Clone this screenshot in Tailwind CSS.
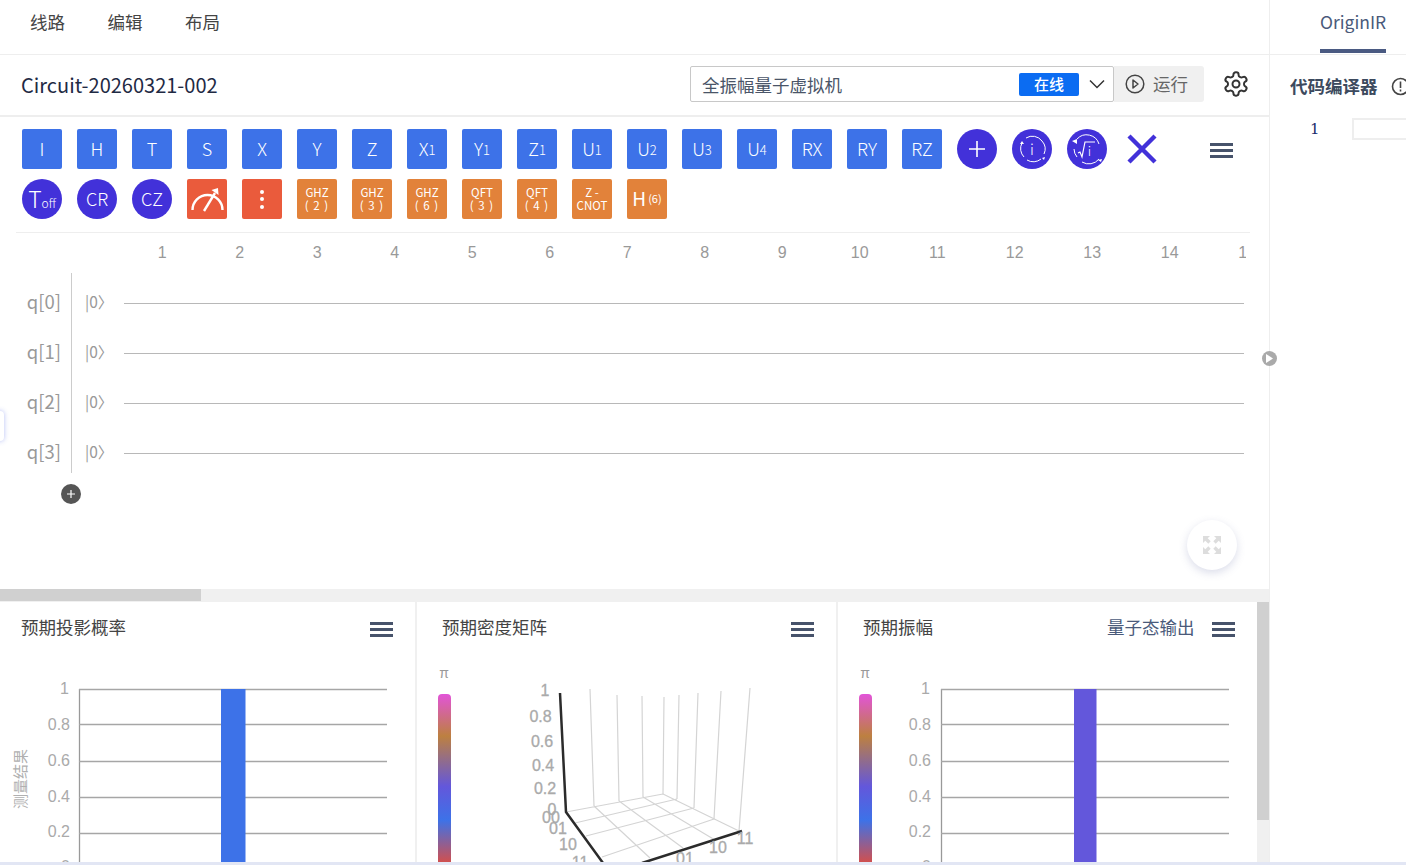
<!DOCTYPE html>
<html lang="zh-CN">
<head>
<meta charset="UTF-8">
<title>量子线路</title>
<script src="https://cdn.jsdelivr.net/npm/@tailwindcss/browser@4"></script>
</head>
<body class="font-['Noto_Sans_CJK_SC',sans-serif] bg-white text-[#444]">
<div class="relative w-[1406px] h-[865px] overflow-hidden flex flex-col">
  <div class="flex h-[862px]">

    <!-- 左侧 -->
    <div class="w-[1270px] shrink-0 border-r border-[#eee] flex flex-col">
      <!-- 顶部菜单 -->
      <div class="h-[55px] shrink-0 border-b border-[#eee] flex items-center pl-[30px] gap-[42.5px] text-[17.5px] leading-[46px] pb-[10px] text-[#444]">
        <span>线路</span><span>编辑</span><span>布局</span>
      </div>
      <!-- 标题栏 -->
      <div class="h-[62px] shrink-0 border-b-2 border-[#eee] flex items-center pl-[21px] pb-[2px]">
        <h1 class="text-[20px] text-[#1f2a44] w-[669px] mt-[2px]">Circuit-20260321-002</h1>
        <div class="w-[424px] h-[36px] border border-[#c8c8c8] rounded-[2px] flex items-center pl-[11px]">
          <span class="text-[17.5px] text-[#4a5568] w-[317px] mt-[2px]">全振幅量子虚拟机</span>
          <span class="w-[60px] h-[23px] bg-[#0b6cf2] rounded-[2px] text-white text-[15px] font-medium flex items-center justify-center">在线</span>
          <svg class="ml-[10px]" width="16" height="10" viewBox="0 0 16 10" fill="none" stroke="#333" stroke-width="1.5"><path d="M1 1.5l7 7 7-7"/></svg>
        </div>
        <div class="w-[90px] h-[36px] bg-[#f0f0f0] rounded-r-[3px] flex items-center pl-[11px] gap-[8px]">
          <svg width="20" height="20" viewBox="0 0 20 20" fill="none" stroke="#444" stroke-width="1.5"><circle cx="10" cy="10" r="8.8"/><path d="M8 6l5 4-5 4z" stroke-linejoin="round"/></svg>
          <span class="text-[17.5px] text-[#666]">运行</span>
        </div>
        <svg class="ml-[18px]" width="28" height="28" viewBox="0 0 24 24" fill="none" stroke="#333" stroke-width="1.7" stroke-linejoin="round"><path d="M12.22 2h-.44a2 2 0 0 0-2 2v.18a2 2 0 0 1-1 1.73l-.43.25a2 2 0 0 1-2 0l-.15-.08a2 2 0 0 0-2.73.73l-.22.38a2 2 0 0 0 .73 2.73l.15.1a2 2 0 0 1 1 1.72v.51a2 2 0 0 1-1 1.74l-.15.09a2 2 0 0 0-.73 2.73l.22.38a2 2 0 0 0 2.73.73l.15-.08a2 2 0 0 1 2 0l.43.25a2 2 0 0 1 1 1.73V20a2 2 0 0 0 2 2h.44a2 2 0 0 0 2-2v-.18a2 2 0 0 1 1-1.73l.43-.25a2 2 0 0 1 2 0l.15.08a2 2 0 0 0 2.73-.73l.22-.39a2 2 0 0 0-.73-2.73l-.15-.08a2 2 0 0 1-1-1.74v-.5a2 2 0 0 1 1-1.74l.15-.09a2 2 0 0 0 .73-2.73l-.22-.38a2 2 0 0 0-2.73-.73l-.15.08a2 2 0 0 1-2 0l-.43-.25a2 2 0 0 1-1-1.73V4a2 2 0 0 0-2-2z"/><circle cx="12" cy="12" r="3"/></svg>
      </div>

      <!-- 线路区 -->
      <div class="relative h-[472px] shrink-0 overflow-hidden">
        <!-- 量子门 -->
        <div class="ml-[16px] mr-[19px] pl-[6px] pt-[12px] h-[116px] border-b border-[#eee]">
          <div class="flex gap-[15px] h-[40px] text-white text-[18px] font-light">
            <div class="w-[40px] h-[40px] pb-[1px] rounded-[2px] bg-[#3d72e8] flex items-center justify-center">I</div>
            <div class="w-[40px] h-[40px] pb-[1px] rounded-[2px] bg-[#3d72e8] flex items-center justify-center">H</div>
            <div class="w-[40px] h-[40px] pb-[1px] rounded-[2px] bg-[#3d72e8] flex items-center justify-center">T</div>
            <div class="w-[40px] h-[40px] pb-[1px] rounded-[2px] bg-[#3d72e8] flex items-center justify-center">S</div>
            <div class="w-[40px] h-[40px] pb-[1px] rounded-[2px] bg-[#3d72e8] flex items-center justify-center">X</div>
            <div class="w-[40px] h-[40px] pb-[1px] rounded-[2px] bg-[#3d72e8] flex items-center justify-center">Y</div>
            <div class="w-[40px] h-[40px] pb-[1px] rounded-[2px] bg-[#3d72e8] flex items-center justify-center">Z</div>
            <div class="w-[40px] h-[40px] pb-[1px] rounded-[2px] bg-[#3d72e8] flex items-center justify-center">X<span class="text-[13px] mt-[3px]">1</span></div>
            <div class="w-[40px] h-[40px] pb-[1px] rounded-[2px] bg-[#3d72e8] flex items-center justify-center">Y<span class="text-[13px] mt-[3px]">1</span></div>
            <div class="w-[40px] h-[40px] pb-[1px] rounded-[2px] bg-[#3d72e8] flex items-center justify-center">Z<span class="text-[13px] mt-[3px]">1</span></div>
            <div class="w-[40px] h-[40px] pb-[1px] rounded-[2px] bg-[#3d72e8] flex items-center justify-center">U<span class="text-[13px] mt-[3px]">1</span></div>
            <div class="w-[40px] h-[40px] pb-[1px] rounded-[2px] bg-[#3d72e8] flex items-center justify-center">U<span class="text-[13px] mt-[3px]">2</span></div>
            <div class="w-[40px] h-[40px] pb-[1px] rounded-[2px] bg-[#3d72e8] flex items-center justify-center">U<span class="text-[13px] mt-[3px]">3</span></div>
            <div class="w-[40px] h-[40px] pb-[1px] rounded-[2px] bg-[#3d72e8] flex items-center justify-center">U<span class="text-[13px] mt-[3px]">4</span></div>
            <div class="w-[40px] h-[40px] pb-[1px] rounded-[2px] bg-[#3d72e8] flex items-center justify-center">RX</div>
            <div class="w-[40px] h-[40px] pb-[1px] rounded-[2px] bg-[#3d72e8] flex items-center justify-center">RY</div>
            <div class="w-[40px] h-[40px] pb-[1px] rounded-[2px] bg-[#3d72e8] flex items-center justify-center">RZ</div>
            <div class="w-[40px] h-[40px] rounded-full bg-[#4231d9] flex items-center justify-center">
              <svg width="18" height="18" viewBox="0 0 18 18" stroke="#fff" stroke-width="1.6"><path d="M9 1v16M1 9h16"/></svg>
            </div>
            <svg class="w-[40px] h-[40px]" viewBox="0 0 40 40" fill="none">
              <circle cx="20" cy="20" r="20" fill="#4231d9"/>
              <path d="M10 14a12 12 0 0 0 2 14M15 31a12 12 0 0 0 14-1M14 9a12 12 0 0 1 16 3a12 12 0 0 1 2 13" stroke="#fff" stroke-width="1"/>
              <path d="M8 15l2-3 2 3zM30 29l3-1-1 3z" fill="#fff"/>
              <text x="20" y="25.5" text-anchor="middle" font-size="15" fill="#fff">i</text>
            </svg>
            <svg class="w-[40px] h-[40px]" viewBox="0 0 40 40" fill="none">
              <circle cx="20" cy="20" r="20" fill="#4231d9"/>
              <path d="M7 20a13 13 0 0 0 3 8M15 33a13 13 0 0 0 17-3M10 10a13 13 0 0 1 22 5" stroke="#fff" stroke-width="1"/>
              <path d="M5 12l5-2 0 5zM31 31l4-1-1 3z" fill="#fff"/>
              <path d="M11 24l2-1 2 5 3-15h10" stroke="#fff" stroke-width="1.2"/>
              <text x="22.5" y="27" text-anchor="middle" font-size="13" fill="#fff">i</text>
            </svg>
            <svg class="w-[40px] h-[40px]" viewBox="0 0 40 40" stroke="#4231d9" stroke-width="4.4"><path d="M7 7l26 26M33 7L7 33"/></svg>
            <div class="ml-[33px] w-[23px] mt-[14px] flex flex-col gap-[3.5px]">
              <div class="h-[2.5px] bg-[#47536b]"></div><div class="h-[2.5px] bg-[#47536b]"></div><div class="h-[2.5px] bg-[#47536b]"></div>
            </div>
          </div>
          <div class="flex gap-[15px] h-[40px] mt-[10px] text-white text-[18px] font-light">
            <div class="w-[40px] h-[40px] pb-[1px] rounded-full bg-[#4231d9] flex items-center justify-center text-[23px]">T<span class="text-[12px] mt-[8px]">off</span></div>
            <div class="w-[40px] h-[40px] pb-[1px] rounded-full bg-[#4231d9] flex items-center justify-center">CR</div>
            <div class="w-[40px] h-[40px] pb-[1px] rounded-full bg-[#4231d9] flex items-center justify-center">CZ</div>
            <svg class="w-[40px] h-[40px] rounded-[2px] bg-[#ea5b3c]" viewBox="0 0 40 40" fill="none" stroke="#fff" stroke-width="2.4">
              <path d="M5.5 31a15 15 0 0 1 30 0"/><path d="M17 32l11-18"/><path d="M24.5 11l6.5-2 .5 7z" fill="#fff" stroke="none"/>
            </svg>
            <div class="w-[40px] h-[40px] rounded-[2px] bg-[#ea5b3c] flex flex-col items-center justify-center gap-[3.5px]">
              <div class="w-[4px] h-[4px] rounded-full bg-white"></div><div class="w-[4px] h-[4px] rounded-full bg-white"></div><div class="w-[4px] h-[4px] rounded-full bg-white"></div>
            </div>
            <div class="w-[40px] h-[40px] rounded-[2px] bg-[#e2823a] flex flex-col items-center justify-center text-[11.5px] font-normal leading-[13px]"><span>GHZ</span><span class="tracking-[1px]">( 2 )</span></div>
            <div class="w-[40px] h-[40px] rounded-[2px] bg-[#e2823a] flex flex-col items-center justify-center text-[11.5px] font-normal leading-[13px]"><span>GHZ</span><span class="tracking-[1px]">( 3 )</span></div>
            <div class="w-[40px] h-[40px] rounded-[2px] bg-[#e2823a] flex flex-col items-center justify-center text-[11.5px] font-normal leading-[13px]"><span>GHZ</span><span class="tracking-[1px]">( 6 )</span></div>
            <div class="w-[40px] h-[40px] rounded-[2px] bg-[#e2823a] flex flex-col items-center justify-center text-[11.5px] font-normal leading-[13px]"><span>QFT</span><span class="tracking-[1px]">( 3 )</span></div>
            <div class="w-[40px] h-[40px] rounded-[2px] bg-[#e2823a] flex flex-col items-center justify-center text-[11.5px] font-normal leading-[13px]"><span>QFT</span><span class="tracking-[1px]">( 4 )</span></div>
            <div class="w-[40px] h-[40px] rounded-[2px] bg-[#e2823a] flex flex-col items-center justify-center text-[11.5px] font-normal leading-[13px]"><span>Z -</span><span>CNOT</span></div>
            <div class="w-[40px] h-[40px] pb-[1px] rounded-[2px] bg-[#e2823a] flex items-center justify-center text-[19px] font-normal">H<span class="text-[11px] ml-[2px]">(6)</span></div>
          </div>
        </div>
        <!-- 标尺 -->
        <div class="ml-[123.5px] w-[1122.5px] h-[40px] overflow-hidden flex items-center font-['Liberation_Sans',sans-serif] text-[16px] text-[#999] whitespace-nowrap">
          <span class="w-[77.5px] shrink-0 text-center">1</span><span class="w-[77.5px] shrink-0 text-center">2</span><span class="w-[77.5px] shrink-0 text-center">3</span><span class="w-[77.5px] shrink-0 text-center">4</span><span class="w-[77.5px] shrink-0 text-center">5</span><span class="w-[77.5px] shrink-0 text-center">6</span><span class="w-[77.5px] shrink-0 text-center">7</span><span class="w-[77.5px] shrink-0 text-center">8</span><span class="w-[77.5px] shrink-0 text-center">9</span><span class="w-[77.5px] shrink-0 text-center">10</span><span class="w-[77.5px] shrink-0 text-center">11</span><span class="w-[77.5px] shrink-0 text-center">12</span><span class="w-[77.5px] shrink-0 text-center">13</span><span class="w-[77.5px] shrink-0 text-center">14</span><span class="w-[77.5px] shrink-0 text-center">15</span>
        </div>
        <!-- 量子比特 -->
        <div class="relative pt-[5px]">
          <div class="absolute left-[71px] top-0 w-px h-[200px] bg-[#ccc]"></div>
          <div class="h-[50px] flex items-center">
            <span class="w-[61px] text-right text-[18.5px] text-[#999] mb-[3px]">q[0]</span><span class="ml-[24px] w-[39px] text-[15.5px] text-[#999] mb-[3px]">|0〉</span><div class="w-[1120px] h-px bg-[#b8b8b8]"></div>
          </div>
          <div class="h-[50px] flex items-center">
            <span class="w-[61px] text-right text-[18.5px] text-[#999] mb-[3px]">q[1]</span><span class="ml-[24px] w-[39px] text-[15.5px] text-[#999] mb-[3px]">|0〉</span><div class="w-[1120px] h-px bg-[#b8b8b8]"></div>
          </div>
          <div class="h-[50px] flex items-center">
            <span class="w-[61px] text-right text-[18.5px] text-[#999] mb-[3px]">q[2]</span><span class="ml-[24px] w-[39px] text-[15.5px] text-[#999] mb-[3px]">|0〉</span><div class="w-[1120px] h-px bg-[#b8b8b8]"></div>
          </div>
          <div class="h-[50px] flex items-center">
            <span class="w-[61px] text-right text-[18.5px] text-[#999] mb-[3px]">q[3]</span><span class="ml-[24px] w-[39px] text-[15.5px] text-[#999] mb-[3px]">|0〉</span><div class="w-[1120px] h-px bg-[#b8b8b8]"></div>
          </div>
          <div class="ml-[61px] mt-[6px] w-[20px] h-[20px] rounded-full bg-[#555] flex items-center justify-center">
            <svg width="8" height="8" viewBox="0 0 8 8" stroke="#fff" stroke-width="1.2"><path d="M4 0v8M0 4h8"/></svg>
          </div>
        </div>
        <!-- 全屏按钮 -->
        <div class="absolute left-[1187px] top-[403px] w-[50px] h-[50px] rounded-full bg-white shadow-[0_3px_8px_rgba(90,100,160,0.22)] flex items-center justify-center">
          <svg width="20" height="20" viewBox="0 0 20 20" fill="#ddd"><path d="M1 1h7l-2.3 2.3 3 3-2.4 2.4-3-3L1 8zM19 1v7l-2.3-2.3-3 3-2.4-2.4 3-3L12 1zM1 19v-7l2.3 2.3 3-3 2.4 2.4-3 3L8 19zM19 19h-7l2.3-2.3-3-3 2.4-2.4 3 3L19 12z"/></svg>
        </div>
        <!-- 左侧标签 -->
        <div class="absolute left-[-6px] top-[294px] w-[10px] h-[30px] rounded-[4px] bg-white shadow-[0_0_5px_rgba(90,110,230,0.45)]"></div>
      </div>

      <!-- 横向滚动条 -->
      <div class="h-[13px] shrink-0 bg-[#f0f0f0]"><div class="w-[201px] h-[12px] bg-[#d0d0d0]"></div></div>

      <!-- 图表区 -->
      <div class="flex-1 min-h-0 flex bg-[#f0f0f0] overflow-hidden">
        <!-- 预期投影概率 -->
        <div class="w-[415px] shrink-0 bg-white mr-[2px]">
          <div class="h-[60px] flex justify-between pl-[21px] pr-[22px] pt-[12px]">
            <span class="text-[17.5px] leading-[26px] text-[#444]">预期投影概率</span>
            <div class="w-[23px] mt-[8px] flex flex-col gap-[3.5px]"><div class="h-[2.5px] bg-[#47536b]"></div><div class="h-[2.5px] bg-[#47536b]"></div><div class="h-[2.5px] bg-[#47536b]"></div></div>
          </div>
          <svg class="block" width="415" height="200" viewBox="0 662 415 200" font-family="Liberation Sans, sans-serif" font-size="16" fill="#aaa">
            <path d="M79.5 689V862" stroke="#999" stroke-width="1.3"/>
            <path d="M79 689.5h308M79 724.5h308M79 761.5h308M79 797.5h308M79 833.5h308" stroke="#a6a6a6" stroke-width="1.3"/>
            <rect x="221" y="689" width="24.5" height="173" fill="#3d72e8"/>
            <g text-anchor="end"><text x="69" y="694">1</text><text x="70" y="730">0.8</text><text x="70" y="766">0.6</text><text x="70" y="802">0.4</text><text x="70" y="837">0.2</text><text x="70" y="872">0</text></g>
            <text transform="translate(26 779) rotate(-90)" text-anchor="middle" font-size="15" font-family="Noto Sans CJK SC, sans-serif" fill="#b0b0b0">测量结果</text>
          </svg>
        </div>
        <!-- 预期密度矩阵 -->
        <div class="w-[419px] shrink-0 bg-white mr-[2px]">
          <div class="h-[60px] flex justify-between pl-[25px] pr-[22px] pt-[12px]">
            <span class="text-[17.5px] leading-[26px] text-[#444]">预期密度矩阵</span>
            <div class="w-[23px] mt-[8px] flex flex-col gap-[3.5px]"><div class="h-[2.5px] bg-[#47536b]"></div><div class="h-[2.5px] bg-[#47536b]"></div><div class="h-[2.5px] bg-[#47536b]"></div></div>
          </div>
          <svg class="block" width="419" height="200" viewBox="417 662 419 200" font-family="Liberation Sans, sans-serif" font-size="16" fill="#aaa">
            <defs><linearGradient id="phaseA" x1="0" y1="0" x2="0" y2="1"><stop offset="0" stop-color="#e254d8"/><stop offset="0.25" stop-color="#bd8040"/><stop offset="0.55" stop-color="#6357db"/><stop offset="0.75" stop-color="#3d72e8"/><stop offset="1" stop-color="#d05050"/></linearGradient></defs>
            <text x="444" y="678" text-anchor="middle" font-size="14" fill="#999">π</text>
            <path d="M438 862V698a4 4 0 0 1 4-4h5a4 4 0 0 1 4 4V862z" fill="url(#phaseA)"/>
            <g fill="none" stroke="#d4d4d4" stroke-width="1.2">
              <path d="M590 689l4 117M617 695l2 106M642 696l1 101M664 697l-1 97M679 695l-2 104M698 693l-4 115M721 691l-7 128M750 688l-11 143"/>
              <path d="M566 812l97-18M575 823l102-24M586 836l108-28M602 857l112-38M594 806l56 52M619 801l64 47M643 797l72 43M663 794l76 37"/>
            </g>
            <path d="M560 693l6 119 37 51M642 863l100-32" fill="none" stroke="#2b2b2b" stroke-width="2.5"/>
            <g text-anchor="middle" stroke="#aaa" stroke-width="0.3"><text x="545" y="696">1</text><text x="540.500" y="722">0.8</text><text x="542" y="747">0.6</text><text x="543" y="771">0.4</text><text x="545" y="794">0.2</text><text x="552" y="815">0</text><text x="551" y="823">00</text><text x="558" y="834">01</text><text x="568" y="850">10</text><text x="580" y="868">11</text><text x="745" y="844">11</text><text x="718" y="853">10</text><text x="685" y="864">01</text></g>
          </svg>
        </div>
        <!-- 预期振幅 -->
        <div class="w-[419px] shrink-0 bg-white">
          <div class="h-[60px] flex pl-[25px] pr-[22px] pt-[12px]">
            <span class="text-[17.5px] leading-[26px] text-[#444] w-[244px]">预期振幅</span>
            <span class="text-[17.5px] leading-[26px] text-[#4a5a7a] w-[105px]">量子态输出</span>
            <div class="w-[23px] mt-[8px] flex flex-col gap-[3.5px]"><div class="h-[2.5px] bg-[#47536b]"></div><div class="h-[2.5px] bg-[#47536b]"></div><div class="h-[2.5px] bg-[#47536b]"></div></div>
          </div>
          <svg class="block" width="419" height="200" viewBox="838 662 419 200" font-family="Liberation Sans, sans-serif" font-size="16" fill="#aaa">
            <defs><linearGradient id="phaseB" x1="0" y1="0" x2="0" y2="1"><stop offset="0" stop-color="#e254d8"/><stop offset="0.25" stop-color="#bd8040"/><stop offset="0.55" stop-color="#6357db"/><stop offset="0.75" stop-color="#3d72e8"/><stop offset="1" stop-color="#d05050"/></linearGradient></defs>
            <text x="865" y="678" text-anchor="middle" font-size="14" fill="#999">π</text>
            <path d="M859 862V698a4 4 0 0 1 4-4h5a4 4 0 0 1 4 4V862z" fill="url(#phaseB)"/>
            <path d="M941.5 689V862" stroke="#999" stroke-width="1.3"/>
            <path d="M941 689.5h288M941 724.5h288M941 761.5h288M941 797.5h288M941 833.5h288" stroke="#a6a6a6" stroke-width="1.3"/>
            <rect x="1074" y="689" width="22.5" height="173" fill="#6357db"/>
            <g text-anchor="end"><text x="930" y="694">1</text><text x="931" y="730">0.8</text><text x="931" y="766">0.6</text><text x="931" y="802">0.4</text><text x="931" y="837">0.2</text><text x="931" y="872">0</text></g>
          </svg>
        </div>
        <!-- 纵向滚动条 -->
        <div class="flex-1 bg-[#f0f0f0]"><div class="h-[218px] bg-[#d0d0d0]"></div></div>
      </div>
    </div>

    <!-- 右侧代码面板 -->
    <div class="flex-1 min-w-0 overflow-hidden">
      <div class="h-[55px] border-b border-[#eee] pl-[50px]">
        <div class="w-[66px] h-[53px] border-b-4 border-[#4a5a82] text-[17.5px] text-[#4a5a7a] pt-[9px] whitespace-nowrap">OriginIR</div>
      </div>
      <div class="pl-[20px] h-[63px] flex items-center whitespace-nowrap">
        <span class="text-[17.5px] font-bold text-[#3c4a5e]">代码编译器</span>
        <svg class="ml-[13px] shrink-0" width="19" height="19" viewBox="0 0 19 19" fill="none" stroke="#444" stroke-width="1.6"><circle cx="9.5" cy="9.5" r="8"/><path d="M9.5 4.5v6.5M9.5 12.5v2"/></svg>
      </div>
      <div class="flex items-start">
        <span class="w-[82px] pl-[40px] font-['DejaVu_Serif',serif] text-[15px] text-[#1a2a6c] leading-[23px]">1</span>
        <div class="flex-1 h-[22px] border-2 border-r-0 border-[#eee]"></div>
      </div>
    </div>
  </div>
  <div class="h-[3px] bg-[#e2e6f4]"></div>

  <!-- 面板折叠按钮 -->
  <div class="absolute left-[1262px] top-[351px] w-[15px] h-[15px] rounded-full bg-[#aaa] flex items-center justify-center">
    <svg width="7" height="9" viewBox="0 0 7 9" fill="#fff"><path d="M0 0l7 4.5-7 4.5z"/></svg>
  </div>
</div>
</body>
</html>
